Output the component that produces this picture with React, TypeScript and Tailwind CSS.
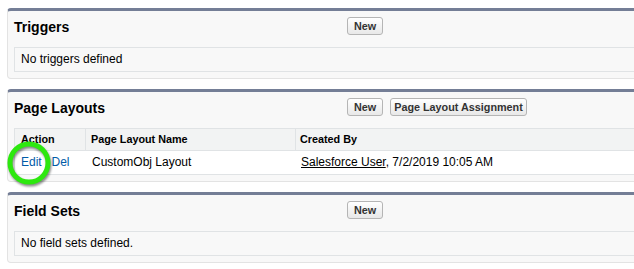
export default function App() {
  const btn =
    "h-[18px] rounded-[3px] border border-[#b5b5b5] bg-gradient-to-b from-white to-[#e8e8e8] text-[10.8px] font-bold leading-[16px] text-[#333]";

  return (
    <div
      className="relative h-[269px] w-[634px] overflow-hidden bg-white pl-[7px] pt-[8px] text-[12px] text-black"
      style={{ fontFamily: '"Liberation Sans", Arial, sans-serif' }}
    >
      {/* Triggers */}
      <div className="mb-[10px] w-[680px] rounded-[4px] border border-t-[3px] border-[#e3e3e3] border-t-[#747e96] bg-[#f8f8f8] pb-[6px]">
        <div className="flex h-[36px]">
          <h2 className="w-[339px] pl-[6px] pt-[7px] text-[14px] font-bold leading-[18px]">Triggers</h2>
          <div className="pt-[6px]">
            <button className={`${btn} px-[6px]`}>New</button>
          </div>
        </div>
        <div className="mx-[6px] h-[25px] border border-[#e0e3e5] pl-[6px] leading-[23px]">
          No triggers defined
        </div>
      </div>

      {/* Page Layouts */}
      <div className="mb-[10px] w-[680px] rounded-[4px] border border-t-[3px] border-[#e3e3e3] border-t-[#747e96] bg-[#f8f8f8] pb-[6px]">
        <div className="flex h-[36px]">
          <h2 className="w-[339px] pl-[6px] pt-[7px] text-[14px] font-bold leading-[18px]">Page Layouts</h2>
          <div className="flex gap-[7px] pt-[6px]">
            <button className={`${btn} px-[6px]`}>New</button>
            <button className={`${btn} px-[3px]`}>Page Layout Assignment</button>
          </div>
        </div>
        <div className="mx-[6px] border border-[#e0e3e5]">
          <div className="flex h-[22px] border-b border-[#e0e3e5] bg-[#f2f3f3] text-[10.8px] font-bold leading-[21px]">
            <div className="w-[71px] border-r border-[#e0e3e5] pl-[6px]">Action</div>
            <div className="w-[210px] border-r border-[#e0e3e5] pl-[5px]">Page Layout Name</div>
            <div className="pl-[4px]">Created By</div>
          </div>
          <div className="flex h-[23px] bg-white leading-[22px]">
            <div className="w-[71px] pl-[6px]">
              <a className="text-[#015ba7]">Edit</a>
              <span className="text-[#9a9a9a]"> | </span>
              <a className="text-[#015ba7]">Del</a>
            </div>
            <div className="w-[210px] pl-[6px]">CustomObj Layout</div>
            <div className="pl-[5px]">
              <a className="underline">Salesforce User</a>, 7/2/2019 10:05 AM
            </div>
          </div>
        </div>
      </div>

      {/* Field Sets */}
      <div className="w-[680px] rounded-[4px] border border-t-[3px] border-[#e3e3e3] border-t-[#747e96] bg-[#f8f8f8] pb-[6px]">
        <div className="flex h-[36px]">
          <h2 className="w-[339px] pl-[6px] pt-[7px] text-[14px] font-bold leading-[18px]">Field Sets</h2>
          <div className="pt-[6px]">
            <button className={`${btn} px-[6px]`}>New</button>
          </div>
        </div>
        <div className="mx-[6px] h-[25px] border border-[#e0e3e5] pl-[6px] leading-[23px]">
          No field sets defined.
        </div>
      </div>

      {/* highlight circle */}
      <svg
        className="absolute left-[5px] top-[140px] drop-shadow-[1px_2px_1px_rgba(0,0,0,0.45)]"
        width="50"
        height="50"
        viewBox="0 0 50 50"
      >
        <circle cx="24" cy="23" r="19" fill="none" stroke="#2de80f" strokeWidth="5" />
      </svg>
    </div>
  );
}
